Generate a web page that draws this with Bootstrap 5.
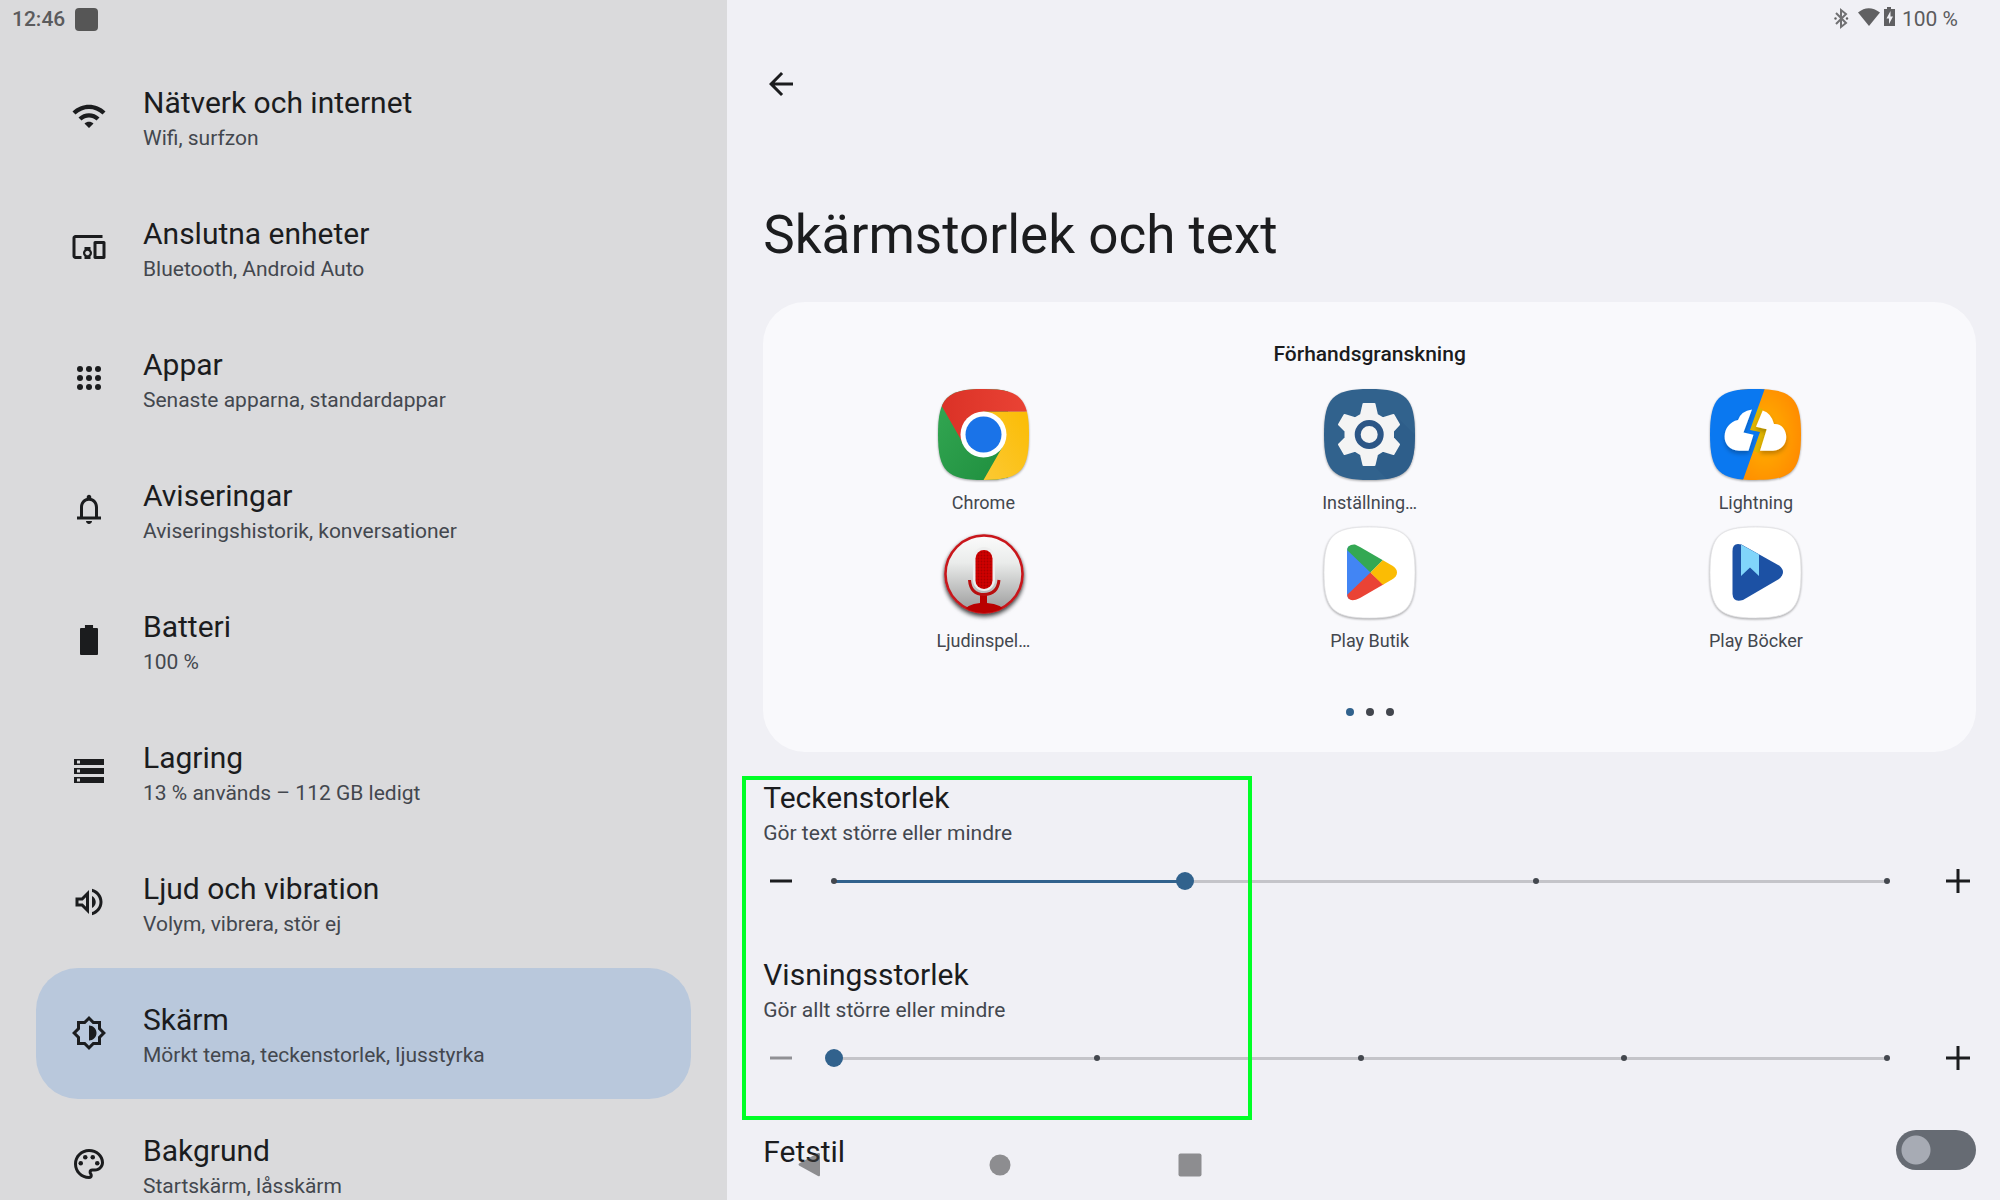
<!DOCTYPE html>
<html lang="sv">
<head>
<meta charset="utf-8">
<meta name="viewport" content="width=device-width, initial-scale=1">
<title>Skärmstorlek och text</title>
<link href="https://cdn.jsdelivr.net/npm/bootstrap@5.3.0/dist/css/bootstrap.min.css" rel="stylesheet">
<style>
  :root { --ink: #1b1c1e; --ink-soft: #43474e; --accent: #31628d; --pane: #f0f0f5; }
  body { font-family: Roboto, "Liberation Sans", sans-serif; color: var(--ink); background: var(--pane); }
  h1, h2, h3, p { margin: 0; font-weight: 400; }
  .side-pane { flex: none; width: calc(100% * 4 / 11); background: #dadadc; }
  .main-pane { flex: 1 1 0; min-width: 0; background: var(--pane); padding: 0 24px 0 36px; }
  .status-strip { height: 38px; font-size: 21px; line-height: 38px; color: #5b5b5d; }
  .side-status { margin-bottom: 13px; padding-left: 12px; gap: 10px; font-weight: 500; }
  .main-status { padding-right: 18px; }
  .app-square { width: 23px; height: 23px; border-radius: 4px; background: #565656; }
  .side-list { padding: 0 36px; }
  .side-link { gap: 36px; padding: 30px 35px 31px; border-radius: 42px; color: var(--ink); text-decoration: none; }
  .side-link.chosen { background: #b9c8dc; }
  .side-text { padding-top: 4px; }
  .glyph { width: 36px; height: 36px; fill: currentColor; flex: none; display: block; }
  .row-title { font-size: 30px; line-height: 36px; font-weight: 400; margin: 0; display: block; }
  .row-note { font-size: 21px; line-height: 25px; margin-top: 5px; color: var(--ink-soft); display: block; }
  .icon-btn { border: 0; background: none; padding: 0; color: var(--ink); flex: none; }
  .icon-btn:disabled { color: #909094; }
  .back-btn { margin-top: 28px; }
  .page-title { font-size: 53px; line-height: 63px; margin: 102px 0 35px; }
  .preview { background: #f9f9fc; border: 0; border-radius: 42px; padding: 40px 27px 36px; }
  .preview-title { font-size: 21px; line-height: 25px; font-weight: 500; margin-bottom: 22px; }
  .app-grid { row-gap: 14px; }
  .app-pic { width: 91px; height: 91px; overflow: visible; display: block; filter: drop-shadow(0 1px 1px rgba(0,0,0,.35)); }
  .app-name { font-size: 18px; line-height: 21px; margin-top: 12px; color: var(--ink-soft); }
  .pager { gap: 12px; margin-top: 57px; }
  .pager-dot { width: 8px; height: 8px; border-radius: 50%; background: var(--ink-soft); }
  .pager-dot.now { background: var(--accent); }
  .size-group { padding-top: 28px; }
  .size-block { margin-bottom: 58px; }
  .size-row { gap: 35px; margin-top: 17px; }
  .rail { height: 36px; margin-right: 18px; }
  .rail-line { height: 3px; background: #c4c4c9; }
  .rail-fill { height: 3px; background: var(--accent); }
  .rail-ticks { inset: 0 -3px; }
  .rail-ticks span { width: 6px; height: 6px; border-radius: 50%; background: var(--ink-soft); }
  .rail input { appearance: none; -webkit-appearance: none; inset: 0 -9px; width: calc(100% + 18px); height: 100%; margin: 0; background: none; }
  .rail input::-webkit-slider-thumb { -webkit-appearance: none; width: 18px; height: 18px; border-radius: 50%; background: var(--accent); border: 0; }
  .rail input::-moz-range-thumb { width: 18px; height: 18px; border-radius: 50%; background: var(--accent); border: 0; }
  .callout-frame { inset: 24px auto 0 -21px; width: 510px; height: 344px; border: 4px solid #00ff26; pointer-events: none; z-index: 2; }
  .bold-row { margin-top: -4px; }
  .form-check-input.bold-switch { width: 80px; height: 40px; margin: 0; border: 0; border-radius: 20px; background-color: #666b73;
    background-image: radial-gradient(circle at 20px 20px, #a7abb4 14px, transparent 15px); background-size: 100% 100%; background-position: left; }
  .sys-nav { bottom: 17px; gap: 154px; z-index: 3; color: rgba(60,60,60,.55); }
</style>
</head>
<body class="vh-100 overflow-hidden position-relative">
<div class="d-flex vh-100 overflow-hidden">
  <nav class="side-pane overflow-hidden" aria-label="Inställningar">
    <div class="status-strip side-status d-flex align-items-center">
      <span>12:46</span><span class="app-square"></span>
    </div>
    <div class="side-list d-flex flex-column">
      <a href="#" class="side-link d-flex align-items-center">
        <svg class="glyph" viewBox="0 0 24 24"><path d="M1 9l2 2c4.97-4.97 13.03-4.97 18 0l2-2C16.93 2.93 7.08 2.93 1 9zm8 8l3 3 3-3c-1.65-1.66-4.34-1.66-6 0zm-4-4l2 2c2.76-2.76 7.24-2.76 10 0l2-2C15.14 9.14 8.87 9.14 5 13z"/></svg>
        <span class="side-text"><span class="row-title">Nätverk och internet</span><span class="row-note">Wifi, surfzon</span></span>
      </a>
      <a href="#" class="side-link d-flex align-items-center">
        <svg class="glyph" viewBox="0 0 24 24"><path d="M3 6h18V4H3c-1.1 0-2 .9-2 2v12c0 1.1.9 2 2 2h4v-2H3V6zm10 6H9v1.78c-.61.55-1 1.33-1 2.22s.39 1.67 1 2.22V20h4v-1.78c.61-.55 1-1.34 1-2.22s-.39-1.67-1-2.22V12zm-2 5.5c-.83 0-1.5-.67-1.5-1.5s.67-1.5 1.5-1.5 1.5.67 1.5 1.5-.67 1.5-1.5 1.5zM22 8h-6c-.5 0-1 .5-1 1v10c0 .5.5 1 1 1h6c.5 0 1-.5 1-1V9c0-.5-.5-1-1-1zm-1 10h-4v-8h4v8z"/></svg>
        <span class="side-text"><span class="row-title">Anslutna enheter</span><span class="row-note">Bluetooth, Android Auto</span></span>
      </a>
      <a href="#" class="side-link d-flex align-items-center">
        <svg class="glyph" viewBox="0 0 24 24"><circle cx="6" cy="6" r="2"/><circle cx="12" cy="6" r="2"/><circle cx="18" cy="6" r="2"/><circle cx="6" cy="12" r="2"/><circle cx="12" cy="12" r="2"/><circle cx="18" cy="12" r="2"/><circle cx="6" cy="18" r="2"/><circle cx="12" cy="18" r="2"/><circle cx="18" cy="18" r="2"/></svg>
        <span class="side-text"><span class="row-title">Appar</span><span class="row-note">Senaste apparna, standardappar</span></span>
      </a>
      <a href="#" class="side-link d-flex align-items-center">
        <svg class="glyph" viewBox="0 0 24 24"><path d="M18 17v-6c0-3.07-1.63-5.64-4.5-6.32V4c0-.83-.67-1.5-1.5-1.5s-1.5.67-1.5 1.5v.68C7.64 5.36 6 7.92 6 11v6H4v2h16v-2h-2zm-2 0H8v-6c0-2.48 1.51-4.5 4-4.5s4 2.02 4 4.5v6zm-4 5c1.1 0 2-.9 2-2h-4c0 1.1.9 2 2 2z"/></svg>
        <span class="side-text"><span class="row-title">Aviseringar</span><span class="row-note">Aviseringshistorik, konversationer</span></span>
      </a>
      <a href="#" class="side-link d-flex align-items-center">
        <svg class="glyph" viewBox="0 0 24 24"><path d="M9.3 2h5.4v2h2.6q.7 0 .7.7v16.600q0 .7-.7.7H6.700q-.7 0-.7-.7V4.700q0-.7.7-.7H9.300z"/></svg>
        <span class="side-text"><span class="row-title">Batteri</span><span class="row-note">100 %</span></span>
      </a>
      <a href="#" class="side-link d-flex align-items-center">
        <svg class="glyph" viewBox="0 0 24 24"><path d="M2 20h20v-4H2v4zm2-3h2v2H4v-2zM2 4v4h20V4H2zm4 3H4V5h2v2zm-4 7h20v-4H2v4zm2-3h2v2H4v-2z"/></svg>
        <span class="side-text"><span class="row-title">Lagring</span><span class="row-note">13 % används – 112 GB ledigt</span></span>
      </a>
      <a href="#" class="side-link d-flex align-items-center">
        <svg class="glyph" viewBox="0 0 24 24"><path d="M3 9v6h4l5 5V4L7 9H3zm7-.17v6.34L7.83 13H5v-2h2.83L10 8.83zM14 7.97v8.05c1.48-.73 2.5-2.25 2.5-4.02 0-1.77-1.02-3.29-2.5-4.03zm0-4.74v2.06c2.89.86 5 3.54 5 6.71s-2.11 5.85-5 6.71v2.06c4.01-.91 7-4.49 7-8.77s-2.99-7.86-7-8.77z"/></svg>
        <span class="side-text"><span class="row-title">Ljud och vibration</span><span class="row-note">Volym, vibrera, stör ej</span></span>
      </a>
      <a href="#" class="side-link chosen d-flex align-items-center" aria-current="page">
        <svg class="glyph" viewBox="0 0 24 24"><path d="M20 15.31L23.31 12 20 8.69V4h-4.69L12 .69 8.69 4H4v4.69L.69 12 4 15.31V20h4.69L12 23.31 15.31 20H20v-4.69zm-2-.83V18h-3.52L12 20.48 9.52 18H6v-3.52L3.52 12 6 9.52V6h3.52L12 3.52 14.48 6H18v3.52L20.48 12 18 14.48zM12 7v10c2.76 0 5-2.24 5-5s-2.24-5-5-5z"/></svg>
        <span class="side-text"><span class="row-title">Skärm</span><span class="row-note">Mörkt tema, teckenstorlek, ljusstyrka</span></span>
      </a>
      <a href="#" class="side-link d-flex align-items-center">
        <svg class="glyph" viewBox="0 0 24 24"><path d="M12 22C6.49 22 2 17.51 2 12S6.49 2 12 2s10 4.04 10 9c0 3.31-2.69 6-6 6h-1.77c-.28 0-.5.22-.5.5 0 .12.05.23.13.33.41.47.64 1.06.64 1.67A2.5 2.5 0 0 1 12 22zm0-18c-4.41 0-8 3.59-8 8s3.59 8 8 8c.28 0 .5-.22.5-.5a.54.54 0 0 0-.14-.35c-.41-.46-.63-1.05-.63-1.65a2.5 2.5 0 0 1 2.5-2.5H16c2.21 0 4-1.79 4-4 0-3.86-3.59-7-8-7z"/><circle cx="6.5" cy="11.5" r="1.5"/><circle cx="9.5" cy="7.5" r="1.5"/><circle cx="14.5" cy="7.5" r="1.5"/><circle cx="17.5" cy="11.5" r="1.5"/></svg>
        <span class="side-text"><span class="row-title">Bakgrund</span><span class="row-note">Startskärm, låsskärm</span></span>
      </a>
    </div>
  </nav>

  <main class="main-pane overflow-hidden">
    <div class="status-strip main-status d-flex align-items-center justify-content-end">
      <svg width="68" height="36" viewBox="0 0 68 36" fill="#606062">
        <path d="M2 12l10 10-5 4V9l5 4L2 23" fill="none" stroke="#707072" stroke-width="2"/><circle cx="1.5" cy="17.5" r="1.2"/><circle cx="13" cy="17.5" r="1.2"/>
        <path d="M24 11.500Q34.500 3 46 11.500L35 25z"/>
        <path fill-rule="evenodd" d="M53 6h4v2h4v17H50V8h3zM56.500 10l-4 7.500H55V23l4-7.500h-2.500z"/>
      </svg>
      <span>100 %</span>
    </div>
    <button type="button" class="icon-btn back-btn d-block" aria-label="Tillbaka">
      <svg class="glyph" viewBox="0 0 24 24"><path d="M20 11H7.83l5.59-5.59L12 4l-8 8 8 8 1.41-1.41L7.83 13H20v-2z"/></svg>
    </button>
    <h1 class="page-title">Skärmstorlek och text</h1>

    <section class="card preview">
      <h2 class="preview-title text-center">Förhandsgranskning</h2>
      <div class="row row-cols-3 gx-0 app-grid">
        <div class="col d-flex flex-column align-items-center">
          <svg class="app-pic" viewBox="0 0 91 91">
            <defs>
              <clipPath id="tile"><path d="M0 45.500C0 9 9 0 45.500 0S91 9 91 45.500 82 91 45.500 91 0 82 0 45.500z"/></clipPath>
              <linearGradient id="chR" x2="1"><stop stop-color="#d93025"/><stop offset="1" stop-color="#ea4335"/></linearGradient>
              <linearGradient id="chG" x1="1" y1="1" x2="0" y2="0"><stop stop-color="#1e8e3e"/><stop offset="1" stop-color="#34a853"/></linearGradient>
              <linearGradient id="chY" x1="0" y1="1" x2="1" y2="0"><stop stop-color="#fcc934"/><stop offset="1" stop-color="#fbbc04"/></linearGradient>
            </defs>
            <g clip-path="url(#tile)">
              <path fill="url(#chG)" d="M0 0h70v91H0z"/>
              <path fill="url(#chY)" d="M45 22.500h46V91H45.500L65 57z"/>
              <path fill="url(#chR)" d="M-6 0H91v22.500H45.500L26 56z"/>
            </g>
            <circle cx="45.500" cy="45.500" r="23" fill="#fff"/><circle cx="45.500" cy="45.500" r="18" fill="#1a73e8"/>
          </svg>
          <span class="app-name">Chrome</span>
        </div>
        <div class="col d-flex flex-column align-items-center">
          <svg class="app-pic" viewBox="0 0 91 91">
            <g clip-path="url(#tile)"><path fill="#31628d" d="M0 0h91v91H0z"/><path fill="#2c5a88" d="M73 28l20 20v43H64L50 77z" opacity=".5"/></g>
            <path fill="#f4f4f4" stroke="#f4f4f4" stroke-width="2" stroke-linejoin="round" d="M39.500 15h11l2.500 11 6 3.300L69.500 26 75 35.500 69 42v7L75 55.500 69.500 65 59 61.700 53 65.500 50.500 76h-11L37 65.500l-6-3.800L20.500 65 15 55.500l6.500-6.500v-7L15 35.500 20.500 26 31 29.300 37 26z"/>
            <circle cx="45.200" cy="45.500" r="11.500" fill="none" stroke="#2c5686" stroke-width="6"/>
          </svg>
          <span class="app-name">Inställning…</span>
        </div>
        <div class="col d-flex flex-column align-items-center">
          <svg class="app-pic" viewBox="0 0 91 91">
            <defs>
              <radialGradient id="ltO" cx=".4" cy=".5" r=".65"><stop stop-color="#ffb300"/><stop offset="1" stop-color="#ff8a00"/></radialGradient>
              <filter id="ltS" x="-20%" y="-20%" width="140%" height="150%"><feDropShadow dx="0" dy="3" stdDeviation="2" flood-opacity=".25"/></filter>
            </defs>
            <g clip-path="url(#tile)">
              <path fill="url(#ltO)" d="M30 0h61v91H30z"/>
              <path d="M50 19l-8.500 21 12 2.500L46 63" fill="none" stroke="#e0b400" stroke-width="6"/>
              <path fill="#0a78f0" d="M0 0h54.700L40 41l10 2-17 48H0z"/>
            </g>
            <g fill="#fff" filter="url(#ltS)">
              <path d="M42 20.500L33.500 43.500l10 2.200L38.500 61.700H29C9 61 11 34 28 31q3-9 14-10.500z"/>
              <path d="M52.700 21.500q8.500 2.500 11.300 13.500c15-1 18 25-1 26.700H50l6.700-21.400L46 37.700z"/>
            </g>
          </svg>
          <span class="app-name">Lightning</span>
        </div>
        <div class="col d-flex flex-column align-items-center">
          <svg class="app-pic" viewBox="0 0 91 91">
            <defs>
              <linearGradient id="micG" x2="0" y2="1"><stop stop-color="#fbfbfb"/><stop offset=".35" stop-color="#eaeceb"/><stop offset="1" stop-color="#999"/></linearGradient>
              <filter id="micS" x="-20%" y="-20%" width="140%" height="150%"><feDropShadow dx="0" dy="2.500" stdDeviation="2" flood-opacity=".6"/></filter>
              <pattern id="micP" width="3" height="3" patternUnits="userSpaceOnUse"><path fill="#d00000" d="M0 0h3v3H0z"/><circle cx="1.500" cy="1.500" r=".9" fill="#a00"/></pattern>
              <clipPath id="micC"><circle cx="46" cy="47" r="39"/></clipPath>
            </defs>
            <circle cx="46" cy="47" r="38.500" fill="url(#micG)" stroke="#c9161a" stroke-width="2.500" filter="url(#micS)"/>
            <g clip-path="url(#micC)"><path d="M22 90Q26 77 42 76v-9h7v9q18 1 22 14z" fill="#b90000"/></g>
            <rect x="35" y="20" width="22" height="44" rx="11" fill="#eee"/>
            <rect x="37.500" y="23" width="17" height="39" rx="8.500" fill="url(#micP)"/>
            <path d="M31.500 53q1 14.500 14.500 14.500T61 53" fill="none" stroke="#b80f0f" stroke-width="3"/>
          </svg>
          <span class="app-name">Ljudinspel…</span>
        </div>
        <div class="col d-flex flex-column align-items-center">
          <svg class="app-pic" viewBox="0 0 91 91">
            <path fill="#fff" stroke="#e2e2e5" stroke-width=".8" d="M0 45.500C0 9 9 0 45.500 0S91 9 91 45.500 82 91 45.500 91 0 82 0 45.500z"/>
            <defs><clipPath id="tri"><path d="M23 24q0-7 8-6.500L36 20 68 38.500Q73 41.500 73 45.500T68 52.500L36 71Q24 77 23 67z"/></clipPath></defs>
            <g clip-path="url(#tri)"><path fill="#4285f4" d="M23 17v57l24-28.500z"/><path fill="#34a853" d="M23 15h55L58 34 46.500 45.500 23 23z"/><path fill="#ea4335" d="M23 68l23.500-22.500L60 58v20H23z"/><path fill="#fbbc04" d="M46.500 45.500L60 32l20-4v36l-20-5z"/></g>
          </svg>
          <span class="app-name">Play Butik</span>
        </div>
        <div class="col d-flex flex-column align-items-center">
          <svg class="app-pic" viewBox="0 0 91 91">
            <path fill="#fff" stroke="#e2e2e5" stroke-width=".8" d="M0 45.500C0 9 9 0 45.500 0S91 9 91 45.500 82 91 45.500 91 0 82 0 45.500z"/>
            <path fill="#1c51a4" d="M22.500 24q0-9 9-6.500L69 38.500q4 3 4 6.500t-4 7L33 73q-10 3-10.500-6z"/>
            <path fill="#81d5fa" d="M31 17.500L49 27.500V49l-9-8.500L31 49z"/>
          </svg>
          <span class="app-name">Play Böcker</span>
        </div>
      </div>
      <div class="pager d-flex justify-content-center"><span class="pager-dot now"></span><span class="pager-dot"></span><span class="pager-dot"></span></div>
    </section>

    <div class="size-group position-relative">
      <div class="callout-frame position-absolute"></div>
      <section class="size-block">
        <label class="row-title" for="fontSize">Teckenstorlek</label>
        <p class="row-note">Gör text större eller mindre</p>
        <div class="size-row d-flex align-items-center">
          <button type="button" class="icon-btn" aria-label="Minska text"><svg class="glyph" viewBox="0 0 36 36"><path d="M7 16.500h22v3H7z"/></svg></button>
          <div class="rail flex-grow-1 position-relative d-flex align-items-center">
            <div class="rail-line w-100"><div class="rail-fill" style="width:33.33%"></div></div>
            <div class="rail-ticks position-absolute d-flex justify-content-between align-items-center"><span></span><span class="invisible"></span><span></span><span></span></div>
            <input type="range" id="fontSize" class="position-absolute" min="0" max="3" value="1">
          </div>
          <button type="button" class="icon-btn" aria-label="Öka text"><svg class="glyph" viewBox="0 0 36 36"><path d="M6 16.500h10.500V6h3v10.500H30v3H19.500V30h-3V19.500H6z"/></svg></button>
        </div>
      </section>
      <section class="size-block">
        <label class="row-title" for="viewSize">Visningsstorlek</label>
        <p class="row-note">Gör allt större eller mindre</p>
        <div class="size-row d-flex align-items-center">
          <button type="button" class="icon-btn" aria-label="Minska allt" disabled><svg class="glyph" viewBox="0 0 36 36"><path d="M7 16.500h22v3H7z"/></svg></button>
          <div class="rail flex-grow-1 position-relative d-flex align-items-center">
            <div class="rail-line w-100"></div>
            <div class="rail-ticks position-absolute d-flex justify-content-between align-items-center"><span></span><span></span><span></span><span></span><span></span></div>
            <input type="range" id="viewSize" class="position-absolute" min="0" max="4" value="0">
          </div>
          <button type="button" class="icon-btn" aria-label="Öka allt"><svg class="glyph" viewBox="0 0 36 36"><path d="M6 16.500h10.500V6h3v10.500H30v3H19.500V30h-3V19.500H6z"/></svg></button>
        </div>
      </section>
    </div>
    <div class="bold-row d-flex justify-content-between align-items-end">
      <label class="row-title" for="boldText">Fetstil</label>
      <input class="form-check-input bold-switch" type="checkbox" role="switch" id="boldText">
    </div>
  </main>
</div>

<div class="sys-nav position-absolute start-0 end-0 d-flex justify-content-center">
  <button type="button" class="icon-btn text-reset" aria-label="Bakåt"><svg class="glyph" viewBox="0 0 36 36"><path d="M7 18.500Q6 17.500 7 16.500L26 6q2-.5 2 1v21q0 2-2 1z"/></svg></button>
  <button type="button" class="icon-btn text-reset" aria-label="Hem"><svg class="glyph" viewBox="0 0 36 36"><circle cx="18" cy="18" r="10.500"/></svg></button>
  <button type="button" class="icon-btn text-reset" aria-label="Översikt"><svg class="glyph" viewBox="0 0 36 36"><rect x="6.500" y="6.500" width="23" height="23" rx="2"/></svg></button>
</div>
<script src="https://cdn.jsdelivr.net/npm/bootstrap@5.3.0/dist/js/bootstrap.bundle.min.js"></script>
</body>
</html>
